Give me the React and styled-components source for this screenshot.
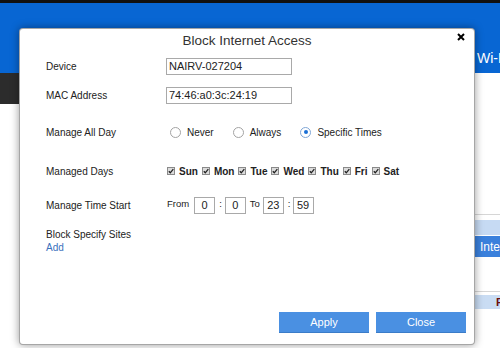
import React from 'react';
import styled, { createGlobalStyle } from 'styled-components';

const Global = createGlobalStyle`
    html, body {
        margin: 0;
        padding: 0;
        overflow: hidden;
        background: #fff;
        font-family: "Liberation Sans", Arial, sans-serif;
    }
`;

const Page = styled.div`
    position: relative;
    width: 500px;
    height: 348px;
    overflow: hidden;
    background: #fff;
`;

const TopLine = styled.div`
    height: 3px;
    background: #111;
`;

const Header = styled.div`
    height: 70px;
    background: #0866d3;
    display: flex;
    align-items: flex-start;
    padding-left: 477px;
    box-sizing: border-box;
    padding-top: 47px;
    color: #fff;
    font-size: 14px;
    white-space: nowrap;
`;

const NavBand = styled.div`
    height: 31px;
    width: 300px;
    background: #2c2c2c;
`;

const Content = styled.div`
    padding-left: 260px;
    padding-top: 110px;
`;

const Rule = styled.div`
    height: 1px;
    background: #d6d6d6;
    margin-top: ${p => p.$mt || 0}px;
`;

const Stripe = styled.div`
    height: ${p => p.$h}px;
    background: ${p => p.$bg};
    margin-top: ${p => p.$mt || 0}px;
    display: flex;
    align-items: center;
    padding-left: 220px;
    color: #fff;
    font-size: 12px;
    white-space: nowrap;
`;

const Cells = styled.div`
    margin-top: 3px;
    height: 14px;
    display: flex;
    background: #c9dcf3;
`;

const CellDivider = styled.div`
    width: 2px;
    margin-left: 230px;
    background: #9fb9da;
`;

const CellText = styled.span`
    color: #6b1010;
    font-size: 11px;
    font-weight: bold;
    margin-left: 6px;
    line-height: 14px;
`;

const Modal = styled.div`
    position: absolute;
    left: 19px;
    top: 28px;
    width: 456px;
    height: 317px;
    box-sizing: border-box;
    background: #fff;
    border: 1px solid rgba(0, 0, 0, 0.35);
    border-radius: 4px;
    box-shadow: 0 0 9px rgba(0, 0, 0, 0.4);
    display: flex;
    flex-direction: column;
    padding: 0 8px 11px 26px;
    color: #222;
    font-size: 10px;
`;

const CloseX = styled.svg`
    position: absolute;
    right: 9px;
    top: 4px;
`;

const Title = styled.div`
    height: 28px;
    padding-top: 3px;
    box-sizing: border-box;
    text-align: center;
    font-size: 13.5px;
    line-height: 17px;
    color: #333;
    margin-left: -18px;
`;

const Row = styled.div`
    display: flex;
    align-items: center;
    height: 18px;
    margin-top: ${p => p.$mt}px;
`;

const Label = styled.div`
    width: 120px;
    flex-shrink: 0;
`;

const TextBox = styled.input`
    width: 126px;
    height: 17px;
    box-sizing: border-box;
    border: 1px solid #a9a9a9;
    padding: 0 2px;
    font-family: "Liberation Sans", Arial, sans-serif;
    font-size: 11px;
    color: #222;
    outline: none;
`;

const RadioItem = styled.span`
    display: flex;
    align-items: center;
    margin-right: 19px;
    margin-left: ${p => p.$ml || 0}px;
`;

const RadioCircle = styled.span`
    width: 11px;
    height: 11px;
    box-sizing: border-box;
    border-radius: 50%;
    border: 1px solid ${p => (p.$on ? '#7fa6d6' : '#a3a3a3')};
    background: #fff;
    display: flex;
    align-items: center;
    justify-content: center;
    margin-right: 6px;
`;

const Dot = styled.span`
    width: 4px;
    height: 4px;
    border-radius: 50%;
    background: #1a6fd6;
`;

const Day = styled.span`
    display: flex;
    align-items: center;
    font-weight: bold;
    margin-right: 3px;
`;

const Check = styled.svg`
    margin: 0 4px 0 1px;
    flex-shrink: 0;
`;

const TimeBox = styled.input`
    width: 21px;
    height: 17px;
    box-sizing: border-box;
    border: 1px solid #a9a9a9;
    text-align: center;
    padding: 0;
    font-family: "Liberation Sans", Arial, sans-serif;
    font-size: 11px;
    color: #222;
    outline: none;
`;

const TimeText = styled.span`
    margin: 0 ${p => p.$mr}px 3px ${p => p.$ml || 0}px;
    font-size: 9.5px;
`;

const Sites = styled.div`
    margin-top: 14px;
    line-height: 13px;
`;

const AddLink = styled.a`
    color: #3a72bd;
    display: block;
    text-decoration: none;
`;

const Footer = styled.div`
    margin-top: auto;
    display: flex;
    justify-content: flex-end;
    gap: 7px;
`;

const Button = styled.button`
    width: 90px;
    height: 21px;
    border: none;
    border-bottom: 1px solid #3b7cc8;
    background: #4a90e2;
    color: #fff;
    font-family: "Liberation Sans", Arial, sans-serif;
    font-size: 11px;
    padding: 0;
`;

const days = ['Sun', 'Mon', 'Tue', 'Wed', 'Thu', 'Fri', 'Sat'];

function CheckMark() {
    return (
        <Check width="8" height="8" viewBox="0 0 8 8">
            <rect x="0.5" y="0.5" width="7" height="7" fill="#dcdcdc" stroke="#8a8a8a" />
            <path d="M1.8 4.2 L3.3 5.8 L6.3 2.2" fill="none" stroke="#222" strokeWidth="1.3" />
        </Check>
    );
}

function Radio({ on, label, ml }) {
    return (
        <RadioItem $ml={ml}>
            <RadioCircle $on={on}>{on && <Dot />}</RadioCircle>
            {label}
        </RadioItem>
    );
}

export default function App() {
    return (
        <Page>
            <Global />
            <TopLine />
            <Header>Wi-Fi Settings</Header>
            <NavBand />
            <Content>
                <Rule />
                <Stripe $h={15} $bg="#c6daf3" $mt={5} />
                <Stripe $h={21} $bg="#3a80dc" $mt={1}>Internet</Stripe>
                <Rule $mt={34} />
                <Cells>
                    <CellDivider />
                    <CellText>Fri</CellText>
                </Cells>
            </Content>

            <Modal>
                <CloseX width="8" height="8" viewBox="0 0 8 8">
                    <path d="M1 1 L7 7 M7 1 L1 7" stroke="#000" strokeWidth="2" />
                </CloseX>
                <Title>Block Internet Access</Title>
                <Row $mt={0}>
                    <Label>Device</Label>
                    <TextBox defaultValue="NAIRV-027204" />
                </Row>
                <Row $mt={11}>
                    <Label>MAC Address</Label>
                    <TextBox defaultValue="74:46:a0:3c:24:19" />
                </Row>
                <Row $mt={19}>
                    <Label>Manage All Day</Label>
                    <Radio label="Never" ml={4} />
                    <Radio label="Always" />
                    <Radio on label="Specific Times" />
                </Row>
                <Row $mt={21}>
                    <Label>Managed Days</Label>
                    {days.map(d => (
                        <Day key={d}>
                            <CheckMark />
                            {d}
                        </Day>
                    ))}
                </Row>
                <Row $mt={16}>
                    <Label>Manage Time Start</Label>
                    <TimeText $ml={1} $mr={5}>From</TimeText>
                    <TimeBox defaultValue="0" />
                    <TimeText $ml={4} $mr={3}>:</TimeText>
                    <TimeBox defaultValue="0" />
                    <TimeText $ml={4} $mr={3}>To</TimeText>
                    <TimeBox defaultValue="23" />
                    <TimeText $ml={4} $mr={2}>:</TimeText>
                    <TimeBox defaultValue="59" />
                </Row>
                <Sites>
                    Block Specify Sites
                    <AddLink href="#">Add</AddLink>
                </Sites>
                <Footer>
                    <Button>Apply</Button>
                    <Button>Close</Button>
                </Footer>
            </Modal>
        </Page>
    );
}
